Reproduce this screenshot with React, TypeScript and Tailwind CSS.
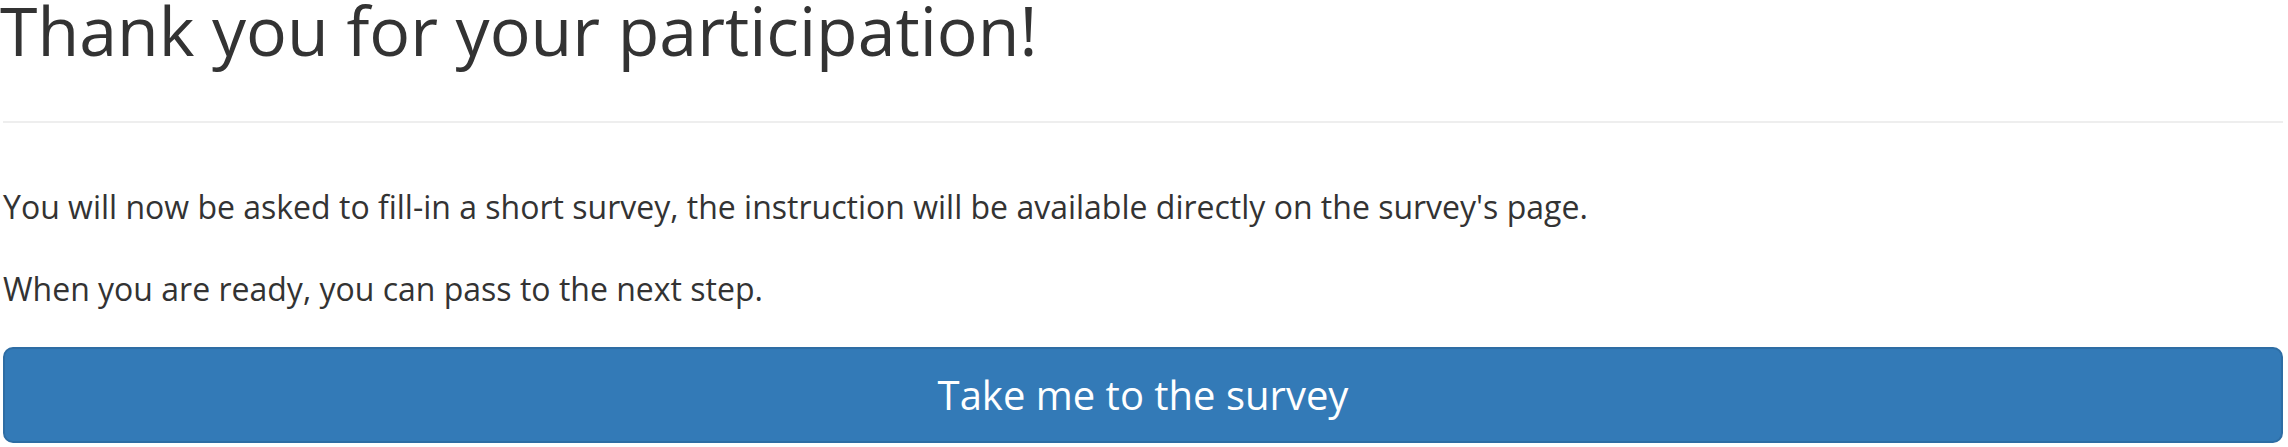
export default function App() {
  return (
    <div className="w-[2288px] h-[447px] bg-white text-[#333] overflow-hidden" style={{ fontFamily: '"Open Sans", "Liberation Sans", sans-serif' }}>
      <div className="pl-[3px] pr-[5px]">
        <h1 className="text-[68px] leading-[59px] font-normal -ml-[3px]">Thank you for your participation!</h1>
        <hr className="mt-[62px] border-0 border-t-2 border-[#eee]" />
        <p className="mt-[61px] text-[32px] leading-[46px]">
          You will now be asked to fill-in a short survey, the instruction will be available directly on the survey's page.
        </p>
        <p className="mt-[36px] text-[32px] leading-[46px]">When you are ready, you can pass to the next step.</p>
        <button className="mt-[35px] w-full h-[96px] rounded-[10px] border-2 border-[#2e6da4] bg-[#337ab7] text-white text-[40px]">
          Take me to the survey
        </button>
      </div>
    </div>
  );
}
